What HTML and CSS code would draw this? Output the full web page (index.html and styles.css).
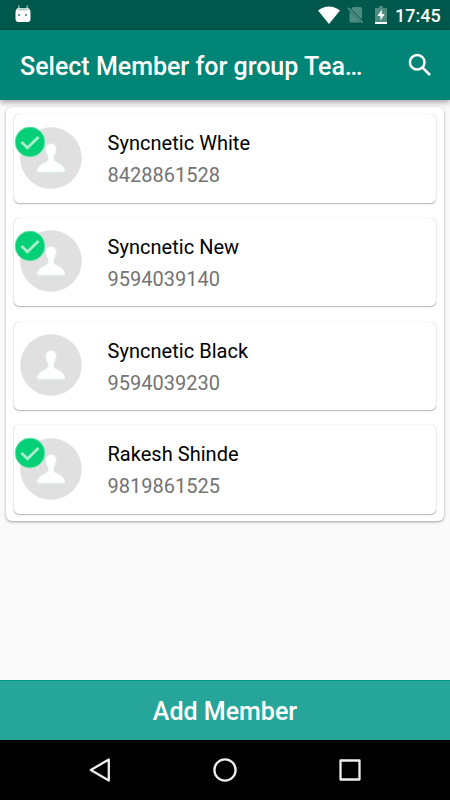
FILE: index.html
```html
<!DOCTYPE html>
<html lang="en">
<head>
<meta charset="utf-8">
<title>Select Member</title>
<link rel="stylesheet" href="styles.css">
</head>
<body>
<svg class="defs" aria-hidden="true">
  <symbol id="avatar" viewBox="0 0 62 62">
    <circle cx="31" cy="31" r="30.8" fill="#e0e0e0"/>
    <path d="M31 16.500c-3.300 0-5.500 2.400-5.300 6 .1 3.200 1.200 4.800 2.300 6.400v3.800c-.6 3.200-11 3.400-11.300 12.500h28.600c-.3-9.100-10.700-9.300-11.300-12.500v-3.800c1.100-1.600 2.200-3.200 2.300-6.400.2-3.600-2-6-5.300-6z" fill="#fff" stroke="#d8ecf0" stroke-width=".8"/>
  </symbol>
  <symbol id="check" viewBox="0 0 32 32">
    <circle cx="16" cy="16" r="14.900" fill="#06d077" stroke="#7be3b1" stroke-width=".8"/>
    <path d="M7.500 16l6 5.800L24.500 11" fill="none" stroke="#a9efce" stroke-width="2.800"/>
  </symbol>
</svg>
<div class="screen">
  <div class="status">
    <svg class="robot" width="16" height="18" viewBox="0 0 16 18"><path d="M3.500.5l1 4M12.500.5l-1 4" stroke="#a6c6c0" stroke-width="1.200"/><path d="M.5 8Q.5 3 4 3h8q3.500 0 3.500 5v6q0 3-3 3h-9q-3 0-3-3z" fill="#fff"/><path d="M2.500 4q5.500-2.200 11 0v1.500h-11z" fill="#b4cec9"/><path d="M3 9h2v2H3zM10 9h2v2h-2z" fill="#6d9c93"/></svg>
    <svg class="wifi" width="22" height="18" viewBox="0 0 22 18"><path d="M0 4.500Q11-3.500 22 4.500L11 18z" fill="#fff"/></svg>
    <svg class="sim" width="17" height="18" viewBox="0 0 17 18"><path d="M6 1h7.500q1.500 0 1.500 1.500v11L4 3zM2.500 5L14 16.500H4q-1.500 0-1.500-1.500z" fill="#4d8b81"/><path d="M.8 1.800l15 15" stroke="#5d968d" stroke-width="1.300"/></svg>
    <svg class="battery" width="12" height="18" viewBox="0 0 12 18"><path d="M4 0h4v2h4v14H0V2h4z" fill="#4d8b81"/><path d="M6.800 3.500L2.500 10H5.400v4.500L9.700 8H6.800zM0 16h12v2H0z" fill="#fff"/></svg>
    <span class="clock">17:45</span>
  </div>
  <header class="appbar">
    <h1>Select Member for group Tea…</h1>
    <svg width="24" height="24" viewBox="0 0 24 24" fill="none" stroke="#fff" stroke-width="2.500"><circle cx="9.200" cy="9.200" r="7.300"/><path d="M14.300 14.300l7.700 7.700"/></svg>
  </header>
  <main>
    <div class="list">
      <div class="card"><div class="pic"><svg class="avatar"><use href="#avatar"/></svg><svg class="check"><use href="#check"/></svg></div><div class="info"><div class="name">Syncnetic White</div><div class="phone">8428861528</div></div></div>
      <div class="card"><div class="pic"><svg class="avatar"><use href="#avatar"/></svg><svg class="check"><use href="#check"/></svg></div><div class="info"><div class="name">Syncnetic New</div><div class="phone">9594039140</div></div></div>
      <div class="card"><div class="pic"><svg class="avatar"><use href="#avatar"/></svg></div><div class="info"><div class="name">Syncnetic Black</div><div class="phone">9594039230</div></div></div>
      <div class="card"><div class="pic"><svg class="avatar"><use href="#avatar"/></svg><svg class="check"><use href="#check"/></svg></div><div class="info"><div class="name">Rakesh Shinde</div><div class="phone">9819861525</div></div></div>
    </div>
  </main>
  <div class="add">Add Member</div>
  <nav>
    <svg width="24" height="26" viewBox="0 0 24 26"><path d="M20.800 2.500v21L2.800 13z"/></svg>
    <svg width="24" height="26" viewBox="0 0 24 26"><circle cx="12" cy="13" r="10.600"/></svg>
    <svg width="24" height="26" viewBox="0 0 24 26"><rect x="2.500" y="3.500" width="19" height="19"/></svg>
  </nav>
</div>
</body>
</html>
```

FILE: styles.css
```css
* { box-sizing: border-box; }
body { margin: 0; font-family: Roboto, sans-serif; }
svg { display: block; flex: none; }
.defs { position: absolute; width: 0; height: 0; }
.screen { width: 450px; height: 800px; display: flex; flex-direction: column; background: #fafafa; overflow: hidden; }
.status { height: 30px; flex: none; background: #00574b; display: flex; align-items: flex-start; padding: 5px 10px 0 15px; color: #fff; }
.robot { margin-right: auto; }
.wifi { margin-top: 1px; }
.sim { margin: 1px 0 0 7px; }
.battery { margin: 1px 0 0 11px; }
.clock { font-size: 18px; font-weight: 500; line-height: 21px; width: 45px; margin-left: 8px; text-align: right; white-space: nowrap; }
.appbar { height: 70px; flex: none; background: #008577; display: flex; align-items: center; justify-content: space-between; padding: 0 18px 0 20px; box-shadow: 0 2px 6px rgba(0,0,0,.38); position: relative; }
h1 { margin: 3px 0 0; font-size: 25px; line-height: 30px; font-weight: 500; color: #fff; white-space: nowrap; }
main { flex: 1; padding: 7px 6px 0; }
.list { background: #fff; border-radius: 6px; padding: 7px 8px; height: 414px; display: flex; flex-direction: column; justify-content: space-between; box-shadow: 0 1px 3px rgba(0,0,0,.36); }
.card { height: 88.500px; border-radius: 5px; background: #fff; box-shadow: 0 0 1px rgba(0,0,0,.3), 0 1px 1.500px rgba(0,0,0,.28); display: flex; padding-left: 6px; }
.pic { position: relative; width: 62px; height: 62px; margin-top: 12.500px; }
.avatar { width: 62px; height: 62px; }
.check { position: absolute; left: -6.500px; top: -.5px; width: 32px; height: 32px; }
.info { margin: 17px 0 0 25.500px; font-size: 20px; line-height: 24px; }
.name { color: #000; letter-spacing: .03px; }
.phone { margin-top: 8px; color: #737373; }
.add { height: 60px; flex: none; background: #26a69a; border-top: 1px solid #009688; color: #fff; font-size: 25px; font-weight: 500; line-height: 61px; text-align: center; }
nav { height: 60px; flex: none; background: #000; display: flex; align-items: center; justify-content: center; gap: 101px; }
nav svg { fill: none; stroke: #eee; stroke-width: 2.300; stroke-linejoin: round; }
```
